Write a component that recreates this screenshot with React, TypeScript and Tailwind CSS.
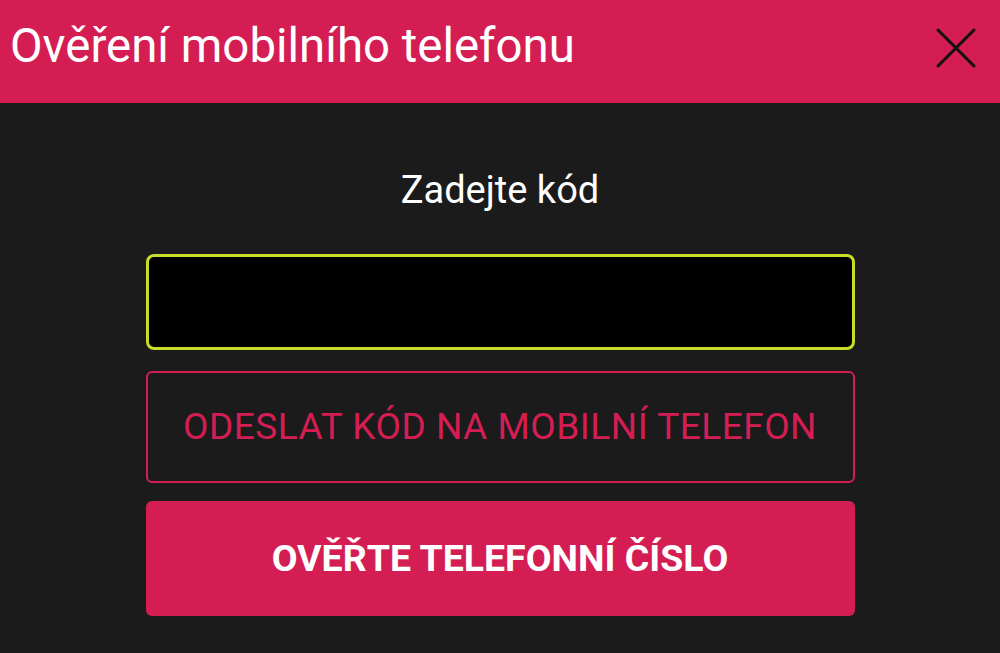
export default function App() {
  return (
    <div
      className="w-[1000px] h-[653px] bg-[#1b1b1b] flex flex-col overflow-hidden"
      style={{ fontFamily: "Roboto, 'Liberation Sans', sans-serif" }}
    >
      {/* Dialog header */}
      <div className="h-[103px] bg-[#d41e53] flex items-center justify-between pl-[10px] pr-[22px] shrink-0">
        <h1 className="text-[47.4px] leading-none text-white pb-[10px]">Ověření mobilního telefonu</h1>
        <button className="w-[44px] h-[44px] flex items-center justify-center mb-[8px]" aria-label="Zavřít">
          <svg width="40" height="40" viewBox="0 0 40 40" fill="none" stroke="#111" strokeWidth="3" strokeLinecap="round">
            <path d="M2 2 L38 38 M38 2 L2 38" />
          </svg>
        </button>
      </div>

      {/* Code form */}
      <div className="flex flex-col items-center pt-[68px]">
        <label className="text-[38px] leading-none text-white">Zadejte kód</label>
        <div className="w-[709px] flex flex-col mt-[45px]">
          <input
            className="h-[96px] w-full bg-black border-[3px] border-[#c8dc2a] rounded-[8px] outline-none text-white text-[32px] px-4"
          />
          <button className="mt-[21px] h-[112px] w-full border-2 border-[#d41e53] rounded-[6px] text-[#d41e53] text-[37px] tracking-[0.5px]">
            ODESLAT KÓD NA MOBILNÍ TELEFON
          </button>
          <button className="mt-[18px] h-[115px] w-full bg-[#d41e53] rounded-[6px] text-white text-[37.5px] font-bold">
            OVĚŘTE TELEFONNÍ ČÍSLO
          </button>
        </div>
      </div>
    </div>
  );
}
